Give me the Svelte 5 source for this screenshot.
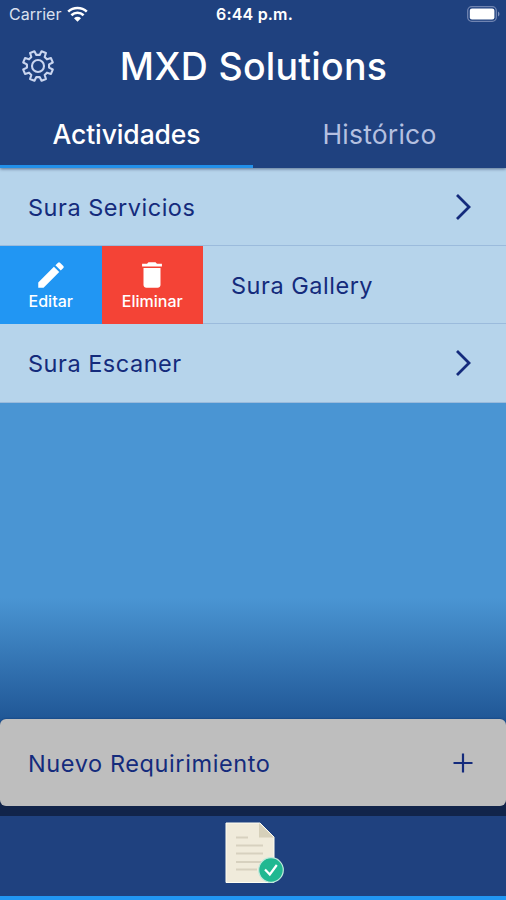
<script>
  let tab = 'Actividades';
  const tabs = ['Actividades', 'Histórico'];
  const items = [
    { name: 'Sura Servicios', open: false },
    { name: 'Sura Gallery', open: true },
    { name: 'Sura Escaner', open: false },
  ];

  // outline of the settings gear
  function gearPath(teeth) {
    const step = 360 / teeth;
    const points = [];
    for (let i = 0; i < teeth; i++) {
      const mid = i * step + step / 2;
      [[-14, 11.2], [-9, 15.2], [9, 15.2], [14, 11.2]].forEach(([off, r]) => {
        const a = ((mid + off) * Math.PI) / 180;
        points.push((r * Math.cos(a)).toFixed(2) + ' ' + (r * Math.sin(a)).toFixed(2));
      });
    }
    return 'M' + points.join('L') + 'Z';
  }
</script>

<main>
  <header>
    <div class="status">
      <div class="carrier">
        <span>Carrier</span>
        <svg width="21" height="16" viewBox="0 0 21 16">
          <path d="M1.2 5.600C6.400.8 14.600.8 19.800 5.600" />
          <path d="M4.400 9.200c3.500-3.200 8.700-3.200 12.200 0" />
          <path class="dot" d="M7 12.200c2-1.800 5-1.800 7 0l-3.500 3.500z" />
        </svg>
      </div>
      <div class="time">6:44 p.m.</div>
      <svg class="battery" width="33" height="16" viewBox="0 0 33 16">
        <rect class="shell" x=".7" y=".7" width="28.600" height="14.600" rx="4" />
        <rect x="2.800" y="2.600" width="24.600" height="10.800" rx="2.200" fill="#fff" />
        <path d="M31 5.500c2 1 2 4 0 5z" fill="#8193bb" />
      </svg>
    </div>
    <div class="title">
      <svg class="gear" width="34" height="34" viewBox="-17 -17 34 34">
        <path d={gearPath(8)} />
        <circle r="6" />
      </svg>
      <h1>MXD Solutions</h1>
    </div>
    <nav>
      {#each tabs as t}
        <button class:active={t === tab} on:click={() => (tab = t)}>
          <span>{t}</span>
        </button>
      {/each}
    </nav>
  </header>

  <section>
    {#each items as item}
      <div class="row">
        {#if item.open}
          <div class="action edit">
            <svg width="34" height="34" viewBox="0 0 24 24">
              <path d="M3 17.250V21h3.750L17.810 9.940l-3.750-3.750L3 17.250zM20.710 7.040a1 1 0 0 0 0-1.410l-2.340-2.340a1 1 0 0 0-1.410 0l-1.830 1.830 3.750 3.750 1.830-1.830z" />
            </svg>
            <span>Editar</span>
          </div>
          <div class="action delete">
            <svg width="34" height="34" viewBox="0 0 24 24">
              <path d="M6 19c0 1.100.9 2 2 2h8c1.100 0 2-.9 2-2V7H6v12zM19 4h-3.500l-1-1h-5l-1 1H5v2h14V4z" />
            </svg>
            <span>Eliminar</span>
          </div>
        {/if}
        <p>{item.name}</p>
        {#if !item.open}
          <svg class="chevron" width="18" height="28" viewBox="0 0 18 28">
            <path d="M2 2l12 12-12 12" />
          </svg>
        {/if}
      </div>
    {/each}
  </section>

  <div class="space"></div>

  <div class="new">
    <p>Nuevo Requirimiento</p>
    <svg width="20" height="20" viewBox="0 0 20 20">
      <path d="M10 .5v19M.5 10h19" />
    </svg>
  </div>

  <footer>
    <svg width="60" height="62" viewBox="0 0 60 62">
      <path d="M1 1h34l14 14v45.500H1z" fill="#f0ebdb" stroke="#fffef2" />
      <path d="M34 1l15 14.500H34z" fill="#d6d0ba" />
      <path d="M11 15.500h12M11 23.500h27M11 31.500h27M11 40h25M11 47.500h21" stroke="#d7d1bf" stroke-width="2" />
      <circle cx="46" cy="48" r="12.300" fill="#21b891" stroke="#bfe9dc" stroke-width="1.200" />
      <path d="M40 47.500l4.800 5 7-9.500" fill="none" stroke="#fff" stroke-width="2.200" />
    </svg>
  </footer>
</main>

<style>
  :global(body) {
    margin: 0;
  }

  main {
    width: 506px;
    height: 900px;
    display: flex;
    flex-direction: column;
    overflow: hidden;
    background: #205796;
    font-family: Inter, Roboto, sans-serif;
    color: #142b7c;
  }

  p, h1 {
    margin: 0;
  }

  header {
    height: 168px;
    display: flex;
    flex-direction: column;
    background: #1f417f;
    color: white;
    z-index: 1;
    box-shadow: 0 1px 3px rgba(0, 20, 60, 0.5);
  }

  .status {
    display: grid;
    grid-template-columns: 1fr auto 1fr;
    align-items: center;
    height: 28px;
    padding: 0 6px 0 9px;
    font-size: 16px;
  }

  .carrier {
    display: flex;
    align-items: center;
    gap: 6px;
    color: #d9e0ef;
  }

  .carrier svg {
    fill: none;
    stroke: white;
    stroke-width: 2.6;
  }

  .carrier .dot {
    fill: white;
    stroke: none;
  }

  .time {
    font-weight: 600;
    letter-spacing: 0.2px;
  }

  .battery {
    justify-self: end;
  }

  .shell {
    fill: none;
    stroke: #7084b1;
    stroke-width: 1.3;
  }

  .title {
    height: 74px;
    display: grid;
    grid-template-columns: 60px 1fr 60px;
    align-items: center;
    padding: 0 0 0 1px;
  }

  .gear {
    margin-left: 20px;
    margin-bottom: 1px;
    fill: none;
    stroke: #c9d5ef;
    stroke-width: 2.1;
    stroke-linejoin: round;
  }

  h1 {
    padding-top: 1px;
    text-align: center;
    font-size: 37.500px;
    font-weight: 500;
    letter-spacing: 0.25px;
    line-height: 76px;
    white-space: nowrap;
  }

  nav {
    flex: 1;
    display: flex;
  }

  button {
    flex: 1;
    padding: 1px 0 0;
    border: 0;
    border-bottom: 3px solid #1f417f;
    background: none;
    font: inherit;
    font-size: 26.500px;
    line-height: 62px;
    letter-spacing: 0.2px;
    color: #b5c0e0;
  }

  button.active {
    border-color: #2290ea;
    color: white;
    font-weight: 500;
    letter-spacing: -0.1px;
  }

  .row {
    height: 78px;
    box-sizing: border-box;
    display: flex;
    align-items: center;
    background: #b6d4eb;
    border-bottom: 1px solid #9bbbdc;
    font-size: 23.500px;
    letter-spacing: 0.52px;
  }

  .row:last-child {
    height: 79px;
  }

  .row p {
    flex: 1;
    padding: 1px 0 0 28px;
  }

  .chevron {
    margin-right: 33px;
    fill: none;
    stroke: #142b7c;
    stroke-width: 2.8;
  }

  .action {
    width: 101.500px;
    height: 78px;
    display: flex;
    flex-direction: column;
    align-items: center;
    box-sizing: border-box;
    padding-top: 12px;
    color: white;
    font-size: 16px;
    font-weight: 500;
    line-height: 18px;
    letter-spacing: 0;
  }

  .action svg {
    fill: white;
  }

  .edit {
    background: #2196f3;
  }

  .delete {
    background: #f44336;
  }

  .space {
    flex: 1;
    background: linear-gradient(#4a95d3 195px, #205796);
  }

  .new {
    height: 87px;
    display: flex;
    align-items: center;
    justify-content: space-between;
    box-sizing: border-box;
    padding: 0 33px 0 28px;
    border-radius: 6px;
    background: #bebebe;
    box-shadow: 0 20px 0 #11244a, 0 0 2px #0c3670;
    font-size: 23.500px;
    letter-spacing: 0.6px;
  }

  .new p {
    padding-top: 1px;
  }

  .new path {
    stroke: #142b7c;
    stroke-width: 2.2;
  }

  footer {
    height: 84px;
    margin-top: 10px;
    box-sizing: border-box;
    display: flex;
    justify-content: center;
    padding: 6px 0 0 4px;
    background: #1f417f;
    border-bottom: 4px solid #2196f3;
    z-index: 1;
  }
</style>
